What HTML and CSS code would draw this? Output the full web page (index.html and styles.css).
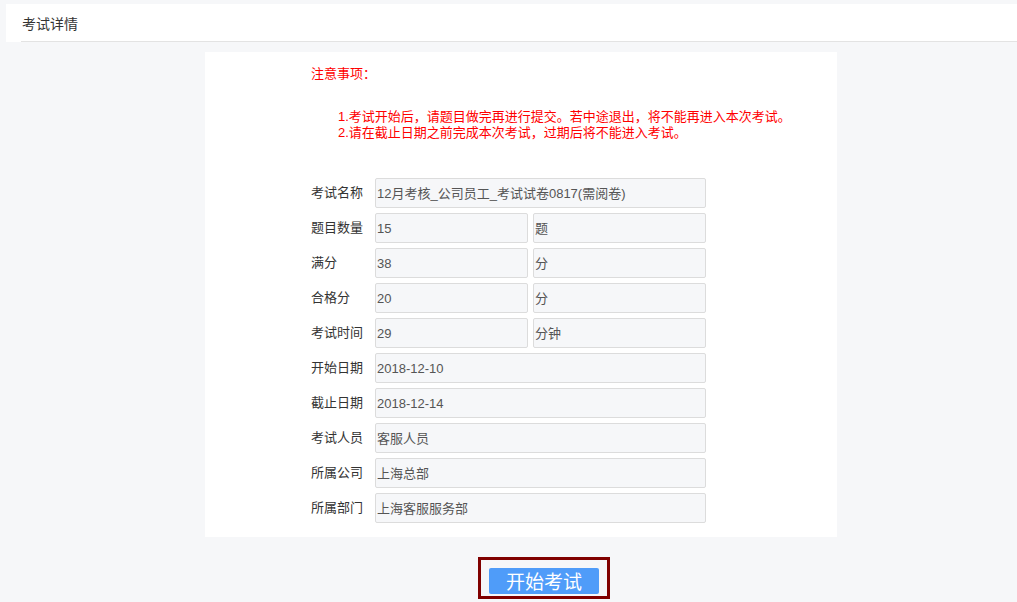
FILE: index.html
```html
<!DOCTYPE html>
<html lang="zh-CN">
<head>
<meta charset="utf-8">
<title>考试详情</title>
<link rel="stylesheet" href="styles.css">
</head>
<body>
<div class="header">
  <div class="header-inner">考试详情</div>
</div>
<div class="card">
  <div class="notice-title">注意事项：</div>
  <div class="notice-list">
    <div class="notice-line">1.考试开始后，请题目做完再进行提交。若中途退出，将不能再进入本次考试。</div>
    <div class="notice-line">2.请在截止日期之前完成本次考试，过期后将不能进入考试。</div>
  </div>
  <div class="form">
    <div class="row"><span class="label">考试名称</span><div class="field full">12月考核_公司员工_考试试卷0817(需阅卷)</div></div>
    <div class="row"><span class="label">题目数量</span><div class="field half">15</div><div class="field unit">题</div></div>
    <div class="row"><span class="label">满分</span><div class="field half">38</div><div class="field unit">分</div></div>
    <div class="row"><span class="label">合格分</span><div class="field half">20</div><div class="field unit">分</div></div>
    <div class="row"><span class="label">考试时间</span><div class="field half">29</div><div class="field unit">分钟</div></div>
    <div class="row"><span class="label">开始日期</span><div class="field full">2018-12-10</div></div>
    <div class="row"><span class="label">截止日期</span><div class="field full">2018-12-14</div></div>
    <div class="row"><span class="label">考试人员</span><div class="field full">客服人员</div></div>
    <div class="row"><span class="label">所属公司</span><div class="field full">上海总部</div></div>
    <div class="row"><span class="label">所属部门</span><div class="field full">上海客服服务部</div></div>
  </div>
</div>
<div class="actions">
  <div class="btn-frame"><button class="btn-start">开始考试</button></div>
</div>
</body>
</html>
```

FILE: styles.css
```css
html, body {
  margin: 0;
  padding: 0;
}
body {
  background: #f6f7f9;
  font-family: "Liberation Sans", "Noto Sans CJK SC", sans-serif;
  color: #333;
  font-size: 13px;
  height: 602px;
  overflow: hidden;
}
.header {
  margin: 4px 0 0 6px;
  background: #fff;
  height: 38px;
}
.header-inner {
  margin-left: 15px;
  padding-left: 1px;
  height: 37px;
  line-height: 40px;
  border-bottom: 1px solid #e3e3e3;
  font-size: 14px;
  color: #333;
}
.card {
  margin: 10px 0 0 205px;
  width: 632px;
  height: 485px;
  background: #fff;
  box-sizing: border-box;
  padding: 13px 0 0 106px;
}
.notice-title {
  color: #ff0000;
  font-size: 13px;
  line-height: 18px;
}
.notice-list {
  color: #ff0000;
  font-size: 13px;
  padding: 26px 0 0 27px;
}
.notice-line {
  height: 16px;
  line-height: 16px;
  overflow: visible;
}
.form {
  padding-top: 37px;
  display: flex;
  flex-direction: column;
  gap: 5px;
}
.row {
  display: flex;
  align-items: center;
  height: 30px;
  gap: 5px;
}
.label {
  width: 59px;
  font-size: 13px;
  color: #333;
  margin-top: -4px;
}
.field {
  box-sizing: border-box;
  height: 30px;
  background: #f6f7f9;
  border: 1px solid #dcdcdc;
  border-radius: 2px;
  padding-left: 1px;
  line-height: 30px;
  color: #555;
  font-size: 13px;
  white-space: nowrap;
}
.full { width: 331px; }
.half { width: 153px; }
.unit { width: 173px; }
.actions {
  padding: 20px 0 0 478px;
}
.btn-frame {
  display: inline-block;
  border: 3px solid #800000;
  padding: 8px 8px 2px 8px;
  width: 110px;
}
.btn-start {
  display: block;
  width: 110px;
  height: 26px;
  border: none;
  border-radius: 2px;
  background: #4f9cf9;
  color: #fff;
  font-family: "Noto Sans CJK SC", sans-serif;
  font-size: 19px;
  line-height: 26px;
  padding: 0;
}
```
